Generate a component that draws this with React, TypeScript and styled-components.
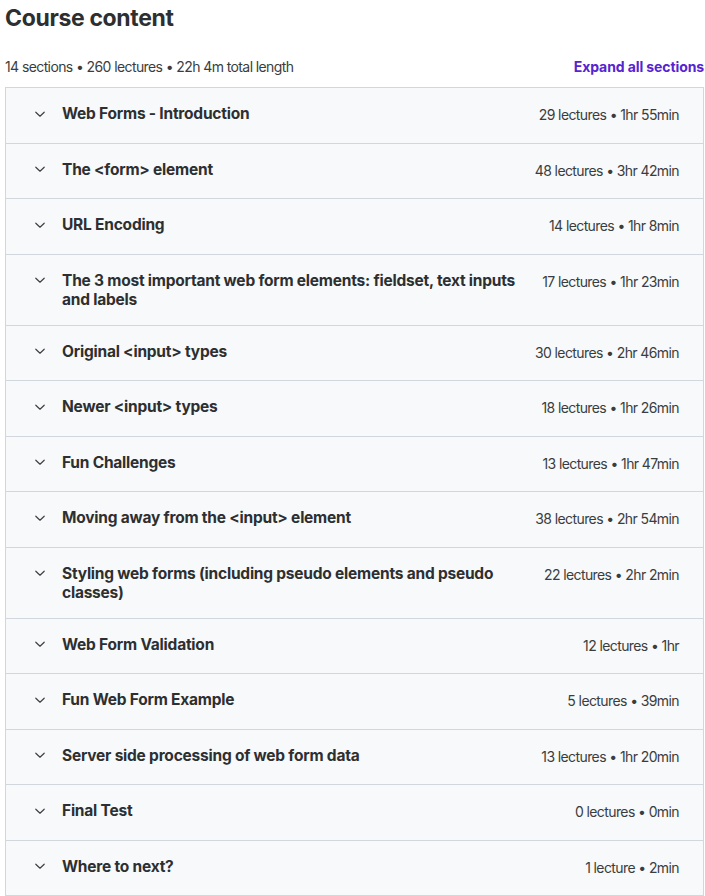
import React from "react";
import styled, { createGlobalStyle } from "styled-components";

const Global = createGlobalStyle`
  html, body { margin: 0; padding: 0; background: #ffffff; }
  body { font-family: Inter, "Noto Sans", "Liberation Sans", sans-serif; color: #2d2f31; }
  * { box-sizing: border-box; }
`;

const Page = styled.div`
  padding: 4px 1px 0 5px;
  width: 705px;
`;

const Heading = styled.h2`
  margin: 0;
  font-size: 23px;
  line-height: 28px;
  font-weight: 700;
  letter-spacing: -0.35px;
  color: #2d2f31;
`;

const MetaBar = styled.div`
  display: flex;
  align-items: center;
  justify-content: space-between;
  margin-top: 25px;
  margin-bottom: 10px;
`;

const MetaText = styled.span`
  font-size: 14px;
  line-height: 20px;
  letter-spacing: -0.6px;
  color: #3a3d40;
`;

const ExpandButton = styled.button`
  border: 0;
  background: none;
  padding: 0;
  font-family: inherit;
  font-size: 14px;
  line-height: 20px;
  font-weight: 700;
  letter-spacing: -0.1px;
  color: #5624d0;
  cursor: pointer;
`;

const Accordion = styled.div`
  border: 1px solid #d1d7dc;
  border-bottom: 0;
`;

const Section = styled.div`
  display: flex;
  align-items: flex-start;
  padding: 16px 24px 16px 26px;
  min-height: 55.5px;
  background: #f7f9fa;
  border-bottom: 1px solid #d1d7dc;
`;

const Chevron = styled.span`
  display: flex;
  align-items: center;
  justify-content: center;
  width: 16px;
  height: 19px;
  margin-right: 14px;
  flex-shrink: 0;
  color: #3e4143;
`;

const Title = styled.span`
  flex: 1;
  font-size: 15.5px;
  line-height: 19px;
  font-weight: 700;
  letter-spacing: -0.22px;
  color: #2d2f31;
`;

const Length = styled.span`
  flex-shrink: 0;
  margin-left: 20px;
  margin-top: 1px;
  font-size: 14px;
  line-height: 19px;
  color: #3a3d40;
  letter-spacing: -0.6px;
`;

const sections: [string, string][] = [
  ["Web Forms - Introduction", "29 lectures • 1hr 55min"],
  ["The <form> element", "48 lectures • 3hr 42min"],
  ["URL Encoding", "14 lectures • 1hr 8min"],
  ["The 3 most important web form elements: fieldset, text inputs and labels", "17 lectures • 1hr 23min"],
  ["Original <input> types", "30 lectures • 2hr 46min"],
  ["Newer <input> types", "18 lectures • 1hr 26min"],
  ["Fun Challenges", "13 lectures • 1hr 47min"],
  ["Moving away from the <input> element", "38 lectures • 2hr 54min"],
  ["Styling web forms (including pseudo elements and pseudo classes)", "22 lectures • 2hr 2min"],
  ["Web Form Validation", "12 lectures • 1hr"],
  ["Fun Web Form Example", "5 lectures • 39min"],
  ["Server side processing of web form data", "13 lectures • 1hr 20min"],
  ["Final Test", "0 lectures • 0min"],
  ["Where to next?", "1 lecture • 2min"],
];

const ChevronIcon = () => (
  <svg width="12" height="12" viewBox="0 0 12 12" fill="none">
    <path d="M1.8 4.2L6 8.2L10.2 4.2" stroke="currentColor" strokeWidth="1.2" strokeLinecap="round" strokeLinejoin="round" />
  </svg>
);

export default function App() {
  return (
    <Page>
      <Global />
      <Heading>Course content</Heading>
      <MetaBar>
        <MetaText>14 sections • 260 lectures • 22h 4m total length</MetaText>
        <ExpandButton>Expand all sections</ExpandButton>
      </MetaBar>
      <Accordion>
        {sections.map(([title, len]) => (
          <Section key={title}>
            <Chevron>
              <ChevronIcon />
            </Chevron>
            <Title>{title}</Title>
            <Length>{len}</Length>
          </Section>
        ))}
      </Accordion>
    </Page>
  );
}
